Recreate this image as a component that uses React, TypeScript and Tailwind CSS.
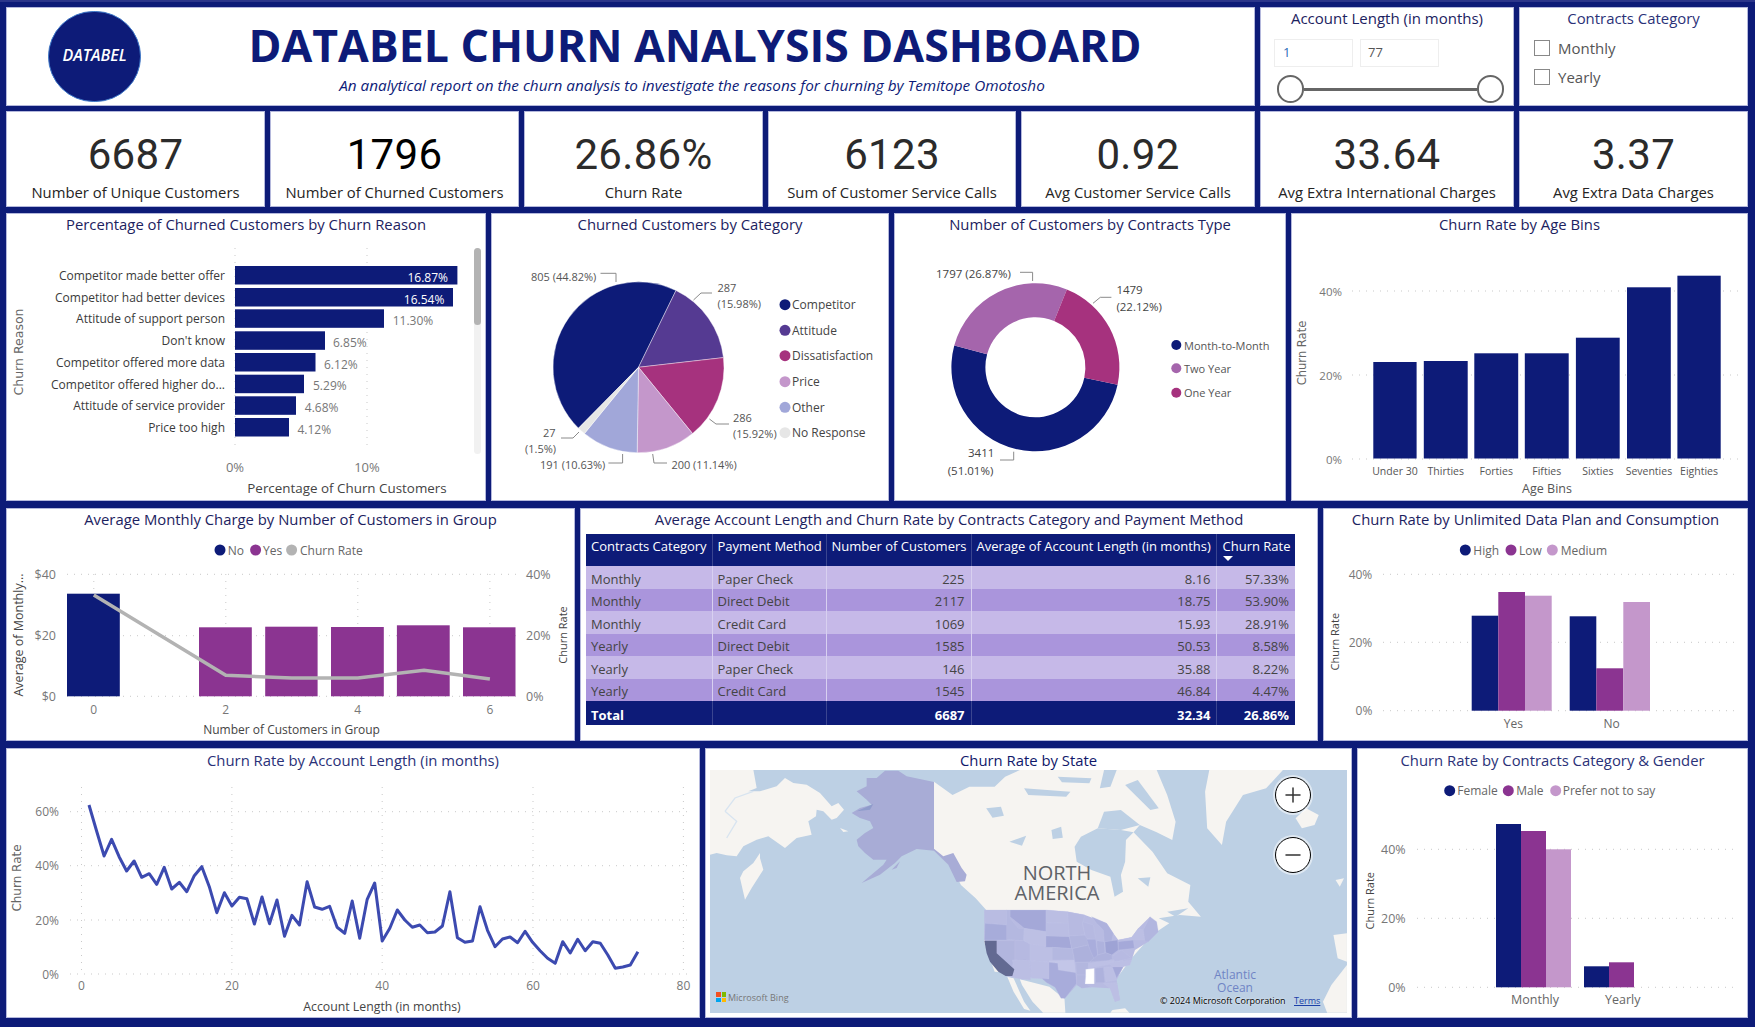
import { ReactNode } from "react";
import { Minus, Plus } from "lucide-react";

const NAVY = "#0d1b78";
const PURPLE = "#8b3491";
const LILAC = "#c497cb";

function polar(cx: number, cy: number, r: number, deg: number) {
  const a = ((deg - 90) * Math.PI) / 180;
  return [cx + r * Math.cos(a), cy + r * Math.sin(a)];
}

function slice(cx: number, cy: number, r: number, inner: number, a0: number, a1: number) {
  const [x0, y0] = polar(cx, cy, r, a0);
  const [x1, y1] = polar(cx, cy, r, a1);
  const big = a1 - a0 > 180 ? 1 : 0;
  if (inner === 0) return `M${cx} ${cy}L${x0} ${y0}A${r} ${r} 0 ${big} 1 ${x1} ${y1}Z`;
  const [x2, y2] = polar(cx, cy, inner, a1);
  const [x3, y3] = polar(cx, cy, inner, a0);
  return `M${x0} ${y0}A${r} ${r} 0 ${big} 1 ${x1} ${y1}L${x2} ${y2}A${inner} ${inner} 0 ${big} 0 ${x3} ${y3}Z`;
}

function Txt(props: {
  x: number;
  y: number;
  children: ReactNode;
  anchor?: "start" | "middle" | "end";
  size?: number;
  fill?: string;
  rotate?: boolean;
  wide?: boolean;
}) {
  const { x, y, children, anchor = "start", size = 12, fill = "#666666", rotate, wide } = props;
  return (
    <text
      x={x}
      y={y}
      textAnchor={rotate ? "middle" : anchor}
      dominantBaseline="central"
      fontSize={size}
      fill={fill}
      fontFamily={wide ? "'DejaVu Sans', sans-serif" : "'Open Sans', sans-serif"}
      transform={rotate ? `rotate(-90 ${x} ${y})` : undefined}
    >
      {children}
    </text>
  );
}

function Grid({ x1, y1, x2, y2 }: { x1: number; y1: number; x2: number; y2: number }) {
  return <line x1={x1} y1={y1} x2={x2} y2={y2} stroke="#c9c9c9" strokeWidth={1} strokeDasharray="1 6" />;
}

function Leader({ d }: { d: string }) {
  return <polyline points={d} fill="none" stroke="#8a8a8a" strokeWidth={1} />;
}

function Dot({ x, y, fill, r = 5.5 }: { x: number; y: number; fill: string; r?: number }) {
  return <circle cx={x} cy={y} r={r} fill={fill} />;
}

function Bar({ x1, x2, top, bottom, fill = NAVY }: { x1: number; x2: number; top: number; bottom: number; fill?: string }) {
  return <rect x={x1} y={top} width={x2 - x1} height={bottom - top} fill={fill} />;
}

// svg is drawn in page coordinates, the viewBox just follows the panel
function ChartPanel(props: {
  x: number;
  y: number;
  w: number;
  h: number;
  title: string;
  titleClass?: string;
  children: ReactNode;
}) {
  const { x, y, w, h, title, titleClass = "text-[#1c2260]", children } = props;
  return (
    <section className="flex flex-col bg-white ring-1 ring-inset ring-[#b4b8dc]" style={{ width: w, height: h }}>
      <h2 className={`h-[26px] text-center text-[14.85px] leading-[22px] ${titleClass}`}>{title}</h2>
      <svg width={w} height={h - 26} viewBox={`${x} ${y + 26} ${w} ${h - 26}`} className="block">
        {children}
      </svg>
    </section>
  );
}

function Kpi({ value, label, width, valueClass = "text-[#2b2b2b]" }: { value: string; label: string; width: string; valueClass?: string }) {
  return (
    <div className={`flex flex-col items-center bg-white pt-[22px] ring-1 ring-inset ring-[#b4b8dc] ${width}`}>
      <div className={`h-[44px] font-['Roboto',sans-serif] text-[42px] leading-[44px] tracking-[0.3px] ${valueClass}`}>{value}</div>
      <div className="mt-[5px] h-[20px] text-[14.85px] leading-[20px] text-[#252423]">{label}</div>
    </div>
  );
}

function ReasonChart() {
  const rows = [
    { name: "Competitor made better offer", y: 266, end: 457.4, value: "16.87%", vx: 448, inside: true },
    { name: "Competitor had better devices", y: 288, end: 453, value: "16.54%", vx: 444.4, inside: true },
    { name: "Attitude of support person", y: 309.3, end: 384, value: "11.30%", vx: 392.7 },
    { name: "Don't know", y: 331.3, end: 325, value: "6.85%", vx: 333 },
    { name: "Competitor offered more data", y: 353, end: 315.5, value: "6.12%", vx: 324 },
    { name: "Competitor offered higher do...", y: 374.7, end: 304, value: "5.29%", vx: 313 },
    { name: "Attitude of service provider", y: 396.3, end: 296, value: "4.68%", vx: 304.8 },
    { name: "Price too high", y: 418, end: 289, value: "4.12%", vx: 297.4 },
  ];
  return (
    <ChartPanel x={6} y={213} w={480} h={288} title="Percentage of Churned Customers by Churn Reason">
      <Grid x1={235} y1={248} x2={235} y2={447} />
      <Grid x1={367} y1={248} x2={367} y2={447} />
      <Txt x={18} y={352} rotate wide size={12.5}>Churn Reason</Txt>
      {rows.map((r) => (
        <g key={r.name}>
          <Txt x={225} y={r.y + 9.5} anchor="end" size={12} fill="#3a3a3a">{r.name}</Txt>
          <Bar x1={235} x2={r.end} top={r.y} bottom={r.y + 18.5} />
          {r.inside ? (
            <Txt x={r.vx} y={r.y + 11} anchor="end" fill="#ffffff" size={12}>{r.value}</Txt>
          ) : (
            <Txt x={r.vx} y={r.y + 11} fill="#777777" size={12}>{r.value}</Txt>
          )}
        </g>
      ))}
      <Txt x={235} y={467} anchor="middle" size={13} fill="#777777">0%</Txt>
      <Txt x={367} y={467} anchor="middle" size={13} fill="#777777">10%</Txt>
      <Txt x={347} y={488} anchor="middle" size={13.4} fill="#444444">Percentage of Churn Customers</Txt>
      <rect x={474} y={248} width={7} height={206} rx={3.5} fill="#f1f1f1" />
      <rect x={474} y={248} width={7} height={77} rx={3.5} fill="#b3b3b3" />
    </ChartPanel>
  );
}

function PieChart() {
  const cx = 638.5;
  const cy = 367.3;
  const parts: [number, number, string][] = [
    [224.6, 386, NAVY],
    [26, 83.5, "#553a92"],
    [83.5, 140.8, "#a6327e"],
    [140.8, 180.9, LILAC],
    [180.9, 219.2, "#a1a7d9"],
    [219.2, 224.6, "#e6e6e6"],
  ];
  const legend: [string, string, number][] = [
    ["Competitor", NAVY, 304.7],
    ["Attitude", "#553a92", 330.3],
    ["Dissatisfaction", "#a6327e", 355.7],
    ["Price", LILAC, 381.7],
    ["Other", "#a1a7d9", 407.3],
    ["No Response", "#e6e6e6", 432.7],
  ];
  return (
    <ChartPanel x={491} y={213} w={398} h={288} title="Churned Customers by Category">
      {parts.map(([a0, a1, fill]) => (
        <path key={fill} d={slice(cx, cy, 85.5, 0, a0, a1)} fill={fill} stroke="#ffffff" strokeWidth={0.4} />
      ))}
      <Leader d="600.5,273.3 616,273.3 616,282" />
      <Leader d="712,293 701,293 693.5,300" />
      <Leader d="709.4,419 716,424 729,424" />
      <Leader d="652.7,454 654,463 667,463" />
      <Leader d="622.6,454 622.6,463 608.4,463" />
      <Leader d="579,432 573,438 561,438" />
      <Txt x={531} y={276} size={11} fill="#555555">805 (44.82%)</Txt>
      <Txt x={717.4} y={287} size={11} fill="#555555">287</Txt>
      <Txt x={717.4} y={303.5} size={11} fill="#555555">(15.98%)</Txt>
      <Txt x={733} y={417} size={11} fill="#555555">286</Txt>
      <Txt x={733} y={433} size={11} fill="#555555">(15.92%)</Txt>
      <Txt x={671.4} y={464} size={11} fill="#555555">200 (11.14%)</Txt>
      <Txt x={540} y={464} size={11} fill="#555555">191 (10.63%)</Txt>
      <Txt x={543} y={432} size={11} fill="#555555">27</Txt>
      <Txt x={525} y={448} size={11} fill="#555555">(1.5%)</Txt>
      {legend.map(([name, fill, y]) => (
        <g key={name}>
          <Dot x={785} y={y} fill={fill} />
          <Txt x={792} y={y} size={12} fill="#444444">{name}</Txt>
        </g>
      ))}
    </ChartPanel>
  );
}

function DonutChart() {
  const cx = 1035.4;
  const cy = 367.3;
  return (
    <ChartPanel x={894} y={213} w={392} h={288} title="Number of Customers by Contracts Type">
      <path d={slice(cx, cy, 84, 50, 102, 285)} fill={NAVY} />
      <path d={slice(cx, cy, 84, 50, 285, 382)} fill="#a565ac" />
      <path d={slice(cx, cy, 84, 50, 22, 102)} fill="#a6327e" />
      <Leader d="1020,272.3 1032.6,272.3 1032.6,281" />
      <Leader d="1111.4,297.3 1100.3,297.3 1093,303.3" />
      <Leader d="1000,460 1013.7,460 1013.7,451.7" />
      <Txt x={936} y={273} size={11.5} fill="#444444">1797 (26.87%)</Txt>
      <Txt x={1116.4} y={289.3} size={11.5} fill="#444444">1479</Txt>
      <Txt x={1116.4} y={306.7} size={11.5} fill="#444444">(22.12%)</Txt>
      <Txt x={968} y={452.7} size={11.5} fill="#444444">3411</Txt>
      <Txt x={947.7} y={470} size={11.5} fill="#444444">(51.01%)</Txt>
      <Dot x={1176.3} y={345} fill={NAVY} r={5} />
      <Dot x={1176.3} y={368.3} fill="#a565ac" r={5} />
      <Dot x={1176.3} y={392.7} fill="#a6327e" r={5} />
      <Txt x={1184} y={345} size={11} fill="#555555">Month-to-Month</Txt>
      <Txt x={1184} y={368.3} size={11} fill="#555555">Two Year</Txt>
      <Txt x={1184} y={392.7} size={11} fill="#555555">One Year</Txt>
    </ChartPanel>
  );
}

function AgeChart() {
  const bars: [string, number, number, number][] = [
    ["Under 30", 1373.3, 1416.6, 362],
    ["Thirties", 1423.8, 1467.7, 361],
    ["Forties", 1474.3, 1518.2, 353.3],
    ["Fifties", 1524.8, 1568.7, 353.3],
    ["Sixties", 1575.9, 1619.7, 337.7],
    ["Seventies", 1627, 1670.8, 287.3],
    ["Eighties", 1677.4, 1720.7, 275.7],
  ];
  return (
    <ChartPanel x={1291} y={213} w={457} h={288} title="Churn Rate by Age Bins">
      <Txt x={1302} y={353} rotate wide size={11.5}>Churn Rate</Txt>
      {[["40%", 291], ["20%", 375], ["0%", 459]].map(([t, y]) => (
        <g key={t}>
          <Grid x1={1352} y1={y as number} x2={1740} y2={y as number} />
          <Txt x={1342} y={y as number} anchor="end" size={11.5} fill="#777777">{t}</Txt>
        </g>
      ))}
      {bars.map(([name, a, b, top]) => (
        <g key={name}>
          <Bar x1={a} x2={b} top={top} bottom={458.5} />
          <Txt x={(a + b) / 2} y={471} anchor="middle" size={10.5} fill="#555555">{name}</Txt>
        </g>
      ))}
      <Txt x={1547} y={488} anchor="middle" size={12.5} fill="#555555">Age Bins</Txt>
    </ChartPanel>
  );
}

function ChargeChart() {
  const bars: [number, number, number, string][] = [
    [67, 119.8, 593.7, NAVY],
    [199, 251.8, 627.3, PURPLE],
    [265.2, 317.6, 626.7, PURPLE],
    [331, 383.8, 627, PURPLE],
    [396.9, 449.7, 625.3, PURPLE],
    [463, 515.5, 627.3, PURPLE],
  ];
  return (
    <ChartPanel x={6} y={508} w={569} h={233} title="Average Monthly Charge by Number of Customers in Group">
      <Dot x={220} y={550} fill={NAVY} />
      <Txt x={227.7} y={550} size={12}>No</Txt>
      <Dot x={255.6} y={550} fill={PURPLE} />
      <Txt x={263} y={550} size={12}>Yes</Txt>
      <Dot x={291.6} y={550} fill="#b3b3b3" />
      <Txt x={300} y={550} size={12}>Churn Rate</Txt>
      {[93.8, 225.8, 357.8, 489.9].map((x) => (
        <Grid key={x} x1={x} y1={574} x2={x} y2={696} />
      ))}
      {[["$40", "40%", 574.3], ["$20", "20%", 635.7], ["$0", "0%", 696.3]].map(([a, b, y]) => (
        <g key={a}>
          <Grid x1={67} y1={y as number} x2={516} y2={y as number} />
          <Txt x={56} y={y as number} anchor="end" size={12.5} fill="#777777">{a}</Txt>
          <Txt x={526} y={y as number} size={12.5} fill="#777777">{b}</Txt>
        </g>
      ))}
      {bars.map(([a, b, top, fill]) => (
        <Bar key={a} x1={a} x2={b} top={top} bottom={696.3} fill={fill} />
      ))}
      <polyline
        points="93.8,595 225.8,675.3 291.6,678 357.8,678 424,670.3 489.9,679"
        fill="none"
        stroke="#b3b3b3"
        strokeWidth={3.5}
      />
      {[["0", 93.8], ["2", 225.8], ["4", 357.8], ["6", 489.9]].map(([t, x]) => (
        <Txt key={t} x={x as number} y={709} anchor="middle" size={12} fill="#777777">{t}</Txt>
      ))}
      <Txt x={291.6} y={729.3} anchor="middle" size={12} fill="#444444">Number of Customers in Group</Txt>
      <Txt x={18} y={635} rotate size={12.5} fill="#444444">Average of Monthly...</Txt>
      <Txt x={562.6} y={635} rotate size={11} fill="#444444">Churn Rate</Txt>
    </ChartPanel>
  );
}

const tableRows = [
  ["Monthly", "Paper Check", "225", "8.16", "57.33%"],
  ["Monthly", "Direct Debit", "2117", "18.75", "53.90%"],
  ["Monthly", "Credit Card", "1069", "15.93", "28.91%"],
  ["Yearly", "Direct Debit", "1585", "50.53", "8.58%"],
  ["Yearly", "Paper Check", "146", "35.88", "8.22%"],
  ["Yearly", "Credit Card", "1545", "46.84", "4.47%"],
];

function SummaryTable() {
  return (
    <section className="flex h-[233px] w-[738px] flex-col bg-white ring-1 ring-inset ring-[#b4b8dc]">
      <h2 className="h-[26px] text-center text-[14.85px] leading-[22px] text-[#1c2260]">
        Average Account Length and Churn Rate by Contracts Category and Payment Method
      </h2>
      <table className="ml-[6px] w-[709px] table-fixed border-collapse text-[13px] leading-[16px]">
        <colgroup>
          <col className="w-[126px]" />
          <col className="w-[114px]" />
          <col className="w-[145px]" />
          <col className="w-[245px]" />
          <col className="w-[79px]" />
        </colgroup>
        <thead>
          <tr className="h-[32px] bg-[#0d1b78] align-top text-white">
            <th className="border-r border-[#3a4590] px-[5px] pt-[4px] text-left font-normal whitespace-nowrap">Contracts Category</th>
            <th className="border-r border-[#3a4590] px-[5px] pt-[4px] text-left font-normal whitespace-nowrap">Payment Method</th>
            <th className="border-r border-[#3a4590] px-[5px] pt-[4px] text-right font-normal whitespace-nowrap">Number of Customers</th>
            <th className="border-r border-[#3a4590] px-[5px] pt-[4px] text-right font-normal whitespace-nowrap">Average of Account Length (in months)</th>
            <th className="relative px-[6px] pt-[4px] text-right font-normal whitespace-nowrap">
              Churn Rate
              <span className="absolute bottom-[5px] left-[6px] h-0 w-0 border-x-[5px] border-t-[5px] border-x-transparent border-t-white" />
            </th>
          </tr>
        </thead>
        <tbody className="text-[#444444]">
          {tableRows.map((r, i) => (
            <tr key={i} className={i % 2 === 0 ? "h-[22.5px] bg-[#c6b9e8]" : "h-[22.5px] bg-[#aa95dc]"}>
              <td className="border-r border-[#d8d0f0] px-[5px] pt-[3px]">{r[0]}</td>
              <td className="border-r border-[#d8d0f0] px-[5px] pt-[3px]">{r[1]}</td>
              <td className="border-r border-[#d8d0f0] px-[6px] pt-[3px] text-right">{r[2]}</td>
              <td className="border-r border-[#d8d0f0] px-[5px] pt-[3px] text-right">{r[3]}</td>
              <td className="px-[6px] pt-[3px] text-right">{r[4]}</td>
            </tr>
          ))}
          <tr className="h-[24px] bg-[#0d1b78] font-bold text-white">
            <td className="border-r border-[#3a4590] px-[5px] pt-[3px]">Total</td>
            <td className="border-r border-[#3a4590] px-[5px] pt-[3px]" />
            <td className="border-r border-[#3a4590] px-[6px] pt-[3px] text-right">6687</td>
            <td className="border-r border-[#3a4590] px-[5px] pt-[3px] text-right">32.34</td>
            <td className="px-[6px] pt-[3px] text-right">26.86%</td>
          </tr>
        </tbody>
      </table>
    </section>
  );
}

function PlanChart() {
  const bars: [number, number, number, string][] = [
    [1471.7, 1498.3, 615.7, NAVY],
    [1498.3, 1525, 592, PURPLE],
    [1525, 1551.7, 595.7, LILAC],
    [1569.7, 1596.3, 616.3, NAVY],
    [1596.3, 1623.3, 668.3, PURPLE],
    [1623.3, 1650, 602, LILAC],
  ];
  return (
    <ChartPanel x={1323} y={508} w={425} h={233} title="Churn Rate by Unlimited Data Plan and Consumption">
      <Dot x={1465.3} y={550} fill={NAVY} />
      <Txt x={1473.3} y={550}>High</Txt>
      <Dot x={1511} y={550} fill={PURPLE} />
      <Txt x={1519} y={550}>Low</Txt>
      <Dot x={1552.3} y={550} fill={LILAC} />
      <Txt x={1560.7} y={550}>Medium</Txt>
      {[["40%", 574.3], ["20%", 642.3], ["0%", 710.7]].map(([t, y]) => (
        <g key={t}>
          <Grid x1={1383} y1={y as number} x2={1738} y2={y as number} />
          <Txt x={1372.3} y={y as number} anchor="end" size={12} fill="#777777">{t}</Txt>
        </g>
      ))}
      {bars.map(([a, b, top, fill]) => (
        <Bar key={a} x1={a} x2={b} top={top} bottom={710.7} fill={fill} />
      ))}
      <Txt x={1513.3} y={723.3} anchor="middle" size={12}>Yes</Txt>
      <Txt x={1611.7} y={723.3} anchor="middle" size={12}>No</Txt>
      <Txt x={1335} y={641.7} rotate size={11} fill="#444444">Churn Rate</Txt>
    </ChartPanel>
  );
}

const lengthRates = [
  180, 258, 333, 283, 335, 378, 348, 397, 386, 418, 367, 432, 412, 440, 392, 365, 425, 503, 443, 483, 457, 461, 537, 456,
  536, 465, 574, 511, 540, 410, 486, 493, 484, 547, 565, 468, 580, 463, 414, 588, 550, 495, 525, 547, 540, 563, 561, 543,
  440, 578, 592, 588, 485, 556, 605, 582, 576, 593, 559, 592, 617, 640, 655, 590, 624, 583, 617, 590, 595, 630, 670, 666,
  660, 620,
];

function LengthChart() {
  const points = lengthRates
    .map((v, i) => `${((180 + 16.6 * (i + 1)) / 2.208).toFixed(1)},${(745 + v / 3).toFixed(1)}`)
    .join(" ");
  return (
    <ChartPanel x={6} y={748} w={694} h={270} title="Churn Rate by Account Length (in months)" titleClass="pt-[1px] text-[#2a3178]">
      {[["0", 81.5], ["20", 231.9], ["40", 382.2], ["60", 533], ["80", 683.4]].map(([t, x]) => (
        <g key={t}>
          <Grid x1={x as number} y1={787} x2={x as number} y2={974} />
          <Txt x={x as number} y={985.7} anchor="middle" fill="#777777">{t}</Txt>
        </g>
      ))}
      {[["60%", 811.7], ["40%", 865.7], ["20%", 920], ["0%", 974]].map(([t, y]) => (
        <g key={t}>
          <Grid x1={70} y1={y as number} x2={693} y2={y as number} />
          <Txt x={59} y={y as number} anchor="end" fill="#777777">{t}</Txt>
        </g>
      ))}
      <polyline points={points} fill="none" stroke="#3c4ab0" strokeWidth={3} strokeLinejoin="round" />
      <Txt x={17.2} y={878} rotate wide size={12}>Churn Rate</Txt>
      <Txt x={382} y={1006.7} anchor="middle" size={12.3} fill="#444444">Account Length (in months)</Txt>
    </ChartPanel>
  );
}

const land = "#f6f4f1";
const sea = "#bdd0e4";
const usStates: [string, string][] = [
  ["28,30 95,30 95,75 30,70", "#b9bce2"],
  ["105,30 213,30 213,95 148,85 130,70 105,50", "#a4a8d8"],
  ["95,30 105,30 105,55 130,85 148,85 145,122 95,118", "#b4b8e0"],
  ["30,70 95,75 95,120 28,120", "#a7acda"],
  ["65,122 120,122 120,180 110,200 65,165", "#b2b6de"],
  ["120,122 147,122 165,132 165,182 120,180", "#b6b9e1"],
  ["112,180 165,182 167,240 140,238 92,228 118,210", "#bbbee3"],
  ["148,85 213,95 213,145 165,132 147,122", "#bdc0e4"],
  ["165,132 232,140 232,188 165,182", "#bcbfe4"],
  ["167,182 222,187 222,237 170,235", "#bcbfe4"],
  ["213,30 278,35 280,70 213,68", "#bbbee3"],
  ["213,68 280,70 283,110 213,108", "#babde3"],
  ["213,108 283,110 290,146 232,142 213,142", "#a4a8d8"],
  ["232,142 292,146 298,180 232,180", "#b4b8e0"],
  ["222,182 298,180 302,218 250,210 248,190 222,187", "#c3c6e8"],
  ["222,187 248,190 250,210 302,218 305,250 270,295 258,295 240,262 215,248 200,235 222,237", "#a8acdb"],
  ["278,35 330,45 322,70 330,105 283,108", "#b7bae1"],
  ["283,108 335,105 342,135 290,146", "#b1b5de"],
  ["292,146 340,135 365,185 300,187", "#adb1dc"],
  ["302,187 342,187 335,225 305,225", "#b3b7df"],
  ["305,225 332,225 330,250 350,262 320,265 305,255", "#b3b7df"],
  ["322,65 355,75 362,118 335,115 330,105", "#b6b9e1"],
  ["335,118 362,118 368,165 358,178 345,150", "#a9addc"],
  ["365,122 388,125 390,160 368,165", "#aeb2dd"],
  ["350,50 395,70 415,100 410,125 388,125 385,90 365,70", "#aeb2dd"],
  ["390,125 428,120 430,150 410,165 392,158", "#9ea3d5"],
  ["345,185 368,165 392,158 410,165 422,172 400,182", "#aeb2dd"],
  ["340,190 400,182 445,180 420,190 340,205", "#bdc0e5"],
  ["332,208 358,205 358,252 330,252 332,230", "#ffffff"],
  ["360,205 385,202 390,248 362,248", "#aeb2dd"],
  ["388,202 412,200 425,240 393,245", "#bcbfe4"],
  ["385,250 425,248 435,300 420,305 405,265", "#bcbfe4"],
  ["412,200 445,200 425,235", "#a5a9d9"],
  ["400,188 470,180 465,195 445,200 412,200", "#bcbfe4"],
  ["410,170 440,150 470,175 420,185", "#b7bae2"],
  ["430,125 475,120 478,145 430,150", "#a5a9d9"],
  ["430,120 470,112 490,85 505,90 510,120 480,120", "#bcbfe4"],
  ["505,90 525,50 545,65 550,95 520,125 510,125", "#b2b6df"],
];

function MapDrawing() {
  return (
    <svg width={637} height={243} viewBox="0 0 637 243" className="absolute inset-0 blur-[0.3px]">
      <rect width={637} height={243} fill={sea} />
      {/* traced from the crop, x and y scale differ */}
      <g transform="translate(-10 -25) scale(0.4209 0.3333)">
        <path
          fill={land}
          d="M556 110L600 150L640 125L700 125L725 95L760 75L1085 75L1110 150L1130 230L1122 285L1085 262L1045 240L1030 262L1075 320L1110 385L1165 420L1160 470L1190 515L1140 510L1090 520L1115 535L1085 560L1060 590L1025 640L990 700L960 720L880 720L800 690L700 680L675 590L680 495L655 460L620 420L600 370L556 315Z"
        />
        <path fill={sea} d="M890 305L905 275L945 250L1000 255L1030 262L1012 285L1010 350L1000 390L1005 440L985 455L975 395L930 375L895 350Z" />
        <path fill={sea} d="M945 250L960 200L1000 195L1045 240L1000 255Z" />
        <path fill={sea} d="M960 75L990 75L975 125L950 130Z" />
        <path fill={sea} d="M770 130L880 140L870 155L780 150Z" />
        <path fill={sea} d="M1010 120L1040 105L1090 190L1070 195Z" />
        <path fill={sea} d="M850 95L930 100L925 115L860 112Z" />
        <path fill={sea} d="M1110 500L1160 490L1130 515Z" />
        <path fill={sea} d="M680 190L715 185L722 212L695 218Z" />
        <path fill={sea} d="M735 290L775 272L765 302Z" />
        <path fill={sea} d="M835 255L858 245L862 278L838 282Z" />
        <path fill={sea} d="M1040 400L1070 397L1065 425Z" />
        <path fill={land} d="M760 703L830 725L866 762L868 803L815 803L790 770L765 720Z" />
        <path fill={land} d="M730 695L745 700L770 770L785 797L770 792L745 740Z" />
        <path fill={land} d="M1210 75L1385 75L1345 130L1290 150L1250 230L1240 300L1205 250L1200 140Z" />
        <path fill={land} d="M1415 220L1440 190L1470 210L1460 240L1430 250Z" />
        <path fill={land} d="M1510 405L1530 400L1520 425Z" />
        <path fill={land} d="M1505 570L1537 565L1537 650L1515 640Z" />
        <path fill={land} d="M1537 660L1500 720L1480 770L1490 803L1537 803Z" />
        <path fill={land} d="M980 795L1010 790L1020 803L975 803Z" />
      </g>
      <g transform="translate(0 -2) scale(0.3333)">
        <path
          fill={land}
          d="M0 5L130 5L140 60L115 70L150 70L200 55L225 30L250 45L290 50L330 75L365 115L385 105L402 125L380 150L365 155L340 130L320 125L318 145L295 160L305 200L260 210L225 240L175 205L140 215L100 235L80 265L50 262L20 255L0 260Z"
        />
        <polyline points="45,130 75,90 130,70" fill="none" stroke="#d8e4f0" strokeWidth={4} />
        <polyline points="45,130 80,160 50,210" fill="none" stroke="#d8e4f0" strokeWidth={4} />
        <path fill={land} d="M150 255L130 285L100 310L90 330L105 395L125 360L160 305L150 270Z" />
        <path fill={land} d="M390 180L415 190L400 192Z" />
        <path
          fill="#a8acd6"
          d="M470 30L500 30L525 8L565 8L590 25L672 42L672 242L700 265L730 255L755 300L770 320L765 340L740 342L715 290L672 248L620 243L575 265L555 285L510 320L455 345L520 290L530 275L490 275L465 255L445 235L440 215L465 195L490 180L480 160L450 150L425 135L450 120L485 110L470 95L440 70L470 55Z"
        />
        <path fill="#a8acd6" d="M545 305L570 280L560 300Z" />
        <path fill="#8f9ccb" d="M440 130L490 108L480 125Z" />
      </g>
      <g transform="translate(265 130) scale(0.3333)">
        <path
          fill="#b8bbe2"
          d="M28 30L213 30L278 35L330 45L395 70L415 100L430 120L470 112L490 85L525 50L550 95L520 125L480 150L470 180L445 200L425 240L435 300L420 305L405 265L350 262L305 255L270 295L240 262L200 235L92 228L40 170L28 118Z"
        />
        {usStates.map(([points, fill]) => (
          <polygon key={points} points={points} fill={fill} stroke="#c4c7e8" strokeWidth={0.8} />
        ))}
        <polygon points="28,122 65,122 65,160 118,208 112,228 92,228 70,215 45,185 35,160" fill="#636a92" />
      </g>
    </svg>
  );
}

function MapPanel() {
  return (
    <section className="flex h-[270px] w-[647px] flex-col bg-white ring-1 ring-inset ring-[#b4b8dc]">
      <h2 className="h-[22px] pt-[1px] text-center text-[14.85px] leading-[22px] text-[#10186a]">Churn Rate by State</h2>
      <div className="relative ml-[5px] h-[243px] w-[637px] overflow-hidden">
        <MapDrawing />
        <button className="absolute top-[7px] left-[565px] flex h-[36px] w-[36px] items-center justify-center rounded-full border-[1.5px] border-black bg-white ring-2 ring-white/50">
          <Plus size={24} strokeWidth={1.5} color="#333333" />
        </button>
        <button className="absolute top-[67px] left-[565px] flex h-[36px] w-[36px] items-center justify-center rounded-full border-[1.5px] border-black bg-white ring-2 ring-white/50">
          <Minus size={24} strokeWidth={1.5} color="#333333" />
        </button>
        <div className="absolute top-[93px] left-[297px] w-[100px] text-center text-[20px] leading-[20px] text-[#5f6268]">
          NORTH
          <br />
          AMERICA
        </div>
        <div className="absolute top-[199px] left-[490px] w-[70px] text-center text-[12px] leading-[12.7px] text-[#6f84c4]">
          Atlantic
          <br />
          Ocean
        </div>
        <div className="absolute top-[222px] left-[6px] grid h-[10px] w-[10px] grid-cols-2 gap-px">
          <span className="bg-[#f25022]" />
          <span className="bg-[#7fba00]" />
          <span className="bg-[#00a4ef]" />
          <span className="bg-[#ffb900]" />
        </div>
        <div className="absolute top-[221px] left-[18px] text-[9px] leading-[13px] text-[#777777]">Microsoft Bing</div>
        <div className="absolute top-[224px] left-[450px] text-[9px] leading-[13px] text-black [text-shadow:0_0_2px_white]">
          © 2024 Microsoft Corporation
        </div>
        <div className="absolute top-[224px] left-[584px] text-[9px] leading-[13px] text-[#1b3fa8] underline">Terms</div>
      </div>
    </section>
  );
}

function GenderChart() {
  const bars: [number, number, number, string][] = [
    [1496, 1521, 824, NAVY],
    [1521, 1546, 831, PURPLE],
    [1546, 1571, 849.3, LILAC],
    [1584, 1609, 966.3, NAVY],
    [1609, 1634, 962.3, PURPLE],
  ];
  return (
    <ChartPanel x={1357} y={748} w={391} h={270} title="Churn Rate by Contracts Category & Gender" titleClass="pt-[1px] text-[#2a3178]">
      <Dot x={1449.7} y={790.7} fill={NAVY} />
      <Txt x={1457.3} y={790.7}>Female</Txt>
      <Dot x={1508.3} y={790.7} fill={PURPLE} />
      <Txt x={1516.3} y={790.7}>Male</Txt>
      <Dot x={1555.7} y={790.7} fill={LILAC} />
      <Txt x={1562.7} y={790.7}>Prefer not to say</Txt>
      {[["40%", 849.3], ["20%", 918.3], ["0%", 987.3]].map(([t, y]) => (
        <g key={t}>
          <Grid x1={1417} y1={y as number} x2={1739} y2={y as number} />
          <Txt x={1405.7} y={y as number} anchor="end" size={12.5} fill="#777777">{t}</Txt>
        </g>
      ))}
      {bars.map(([a, b, top, fill]) => (
        <Bar key={a} x1={a} x2={b} top={top} bottom={987.3} fill={fill} />
      ))}
      <Txt x={1535} y={999.3} anchor="middle" size={12.5}>Monthly</Txt>
      <Txt x={1622.7} y={999.3} anchor="middle" size={12.5}>Yearly</Txt>
      <Txt x={1369.3} y={900.7} rotate size={11} fill="#444444">Churn Rate</Txt>
    </ChartPanel>
  );
}

export default function App() {
  return (
    <div className="flex h-[1027px] w-[1755px] flex-col overflow-hidden border-t-2 border-[#2b358a] bg-[#0d1b78] pt-[5px] pl-[6px] font-['Open_Sans',sans-serif]">
      <div className="flex h-[99px] gap-[5px]">
        <header className="flex w-[1249px] items-center bg-white ring-1 ring-inset ring-[#b4b8dc]">
          <div className="ml-[42px] flex h-[91px] w-[93px] shrink-0 items-center justify-center rounded-full border border-[#3e79c9] bg-[#0d1b78] pb-[3px] text-[16px] font-semibold text-white italic">
            DATABEL
          </div>
          <div className="flex flex-1 flex-col items-center pr-[6px]">
            <h1 className="text-[44.6px] leading-[55px] font-bold text-[#0d1b78]">DATABEL CHURN ANALYSIS DASHBOARD</h1>
            <p className="mt-[3px] mr-[6px] mb-[2px] text-[15.3px] leading-[20px] text-[#0d1b78] italic">
              An analytical report on the churn analysis to investigate the reasons for churning by Temitope Omotosho
            </p>
          </div>
        </header>
        <div className="flex w-[254px] flex-col bg-white ring-1 ring-inset ring-[#b4b8dc]">
          <div className="h-[22px] text-center text-[15px] leading-[22px] text-[#1c2260]">Account Length (in months)</div>
          <div className="mt-[10px] ml-[14px] flex gap-[7px] text-[13px]">
            <div className="flex h-[28px] w-[79px] items-center border border-[#eeeeee] pl-[8px] text-[#2b6cb8]">1</div>
            <div className="flex h-[28px] w-[79px] items-center border border-[#eeeeee] pl-[7px] text-[#555555]">77</div>
          </div>
          <div className="mt-[8px] mr-[10px] ml-[17px] flex items-center">
            <span className="h-[28px] w-[27px] rounded-full border-2 border-[#666666] bg-white" />
            <span className="h-[3px] flex-1 bg-[#666666]" />
            <span className="h-[28px] w-[27px] rounded-full border-2 border-[#666666] bg-white" />
          </div>
        </div>
        <div className="flex w-[229px] flex-col bg-white ring-1 ring-inset ring-[#b4b8dc]">
          <div className="h-[22px] text-center text-[14.9px] leading-[22px] text-[#2a3178]">Contracts Category</div>
          <div className="mt-[11px] ml-[15px] flex h-[16px] items-center gap-[8px] text-[15px] text-[#555555]">
            <span className="h-[16px] w-[16px] border border-[#888888]" />
            Monthly
          </div>
          <div className="mt-[13px] ml-[15px] flex h-[16px] items-center gap-[8px] text-[15px] text-[#555555]">
            <span className="h-[16px] w-[16px] border border-[#888888]" />
            Yearly
          </div>
        </div>
      </div>

      <div className="mt-[5px] flex h-[96px] gap-[5px]">
        <Kpi width="w-[259px]" value="6687" label="Number of Unique Customers" />
        <Kpi width="w-[249px]" value="1796" label="Number of Churned Customers" valueClass="text-black" />
        <Kpi width="w-[239px]" value="26.86%" label="Churn Rate" />
        <Kpi width="w-[248px]" value="6123" label="Sum of Customer Service Calls" />
        <Kpi width="w-[234px]" value="0.92" label="Avg Customer Service Calls" />
        <Kpi width="w-[254px]" value="33.64" label="Avg Extra International Charges" />
        <Kpi width="w-[229px]" value="3.37" label="Avg Extra Data Charges" />
      </div>

      <div className="mt-[6px] flex h-[288px] gap-[5px]">
        <ReasonChart />
        <PieChart />
        <DonutChart />
        <AgeChart />
      </div>

      <div className="mt-[7px] flex h-[233px] gap-[5px]">
        <ChargeChart />
        <SummaryTable />
        <PlanChart />
      </div>

      <div className="mt-[7px] flex h-[270px] gap-[5px]">
        <LengthChart />
        <MapPanel />
        <GenderChart />
      </div>
    </div>
  );
}
